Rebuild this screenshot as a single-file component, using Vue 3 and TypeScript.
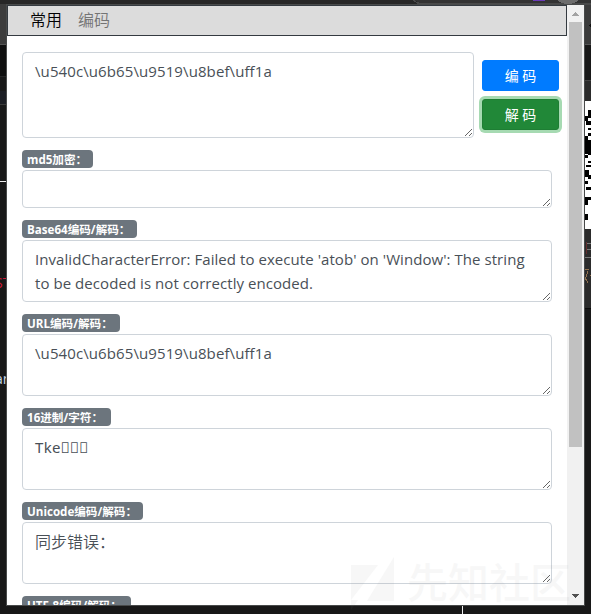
<script setup lang="ts">
import { ref } from 'vue'

interface Field {
  label: string
  labelWidth: number
  height: number
  value: string
  kind: string
}

const source = ref('\\u540c\\u6b65\\u9519\\u8bef\\uff1a')
const fields = ref<Field[]>([
  { label: 'md5加密：', labelWidth: 71, height: 38, value: '', kind: 'plain' },
  {
    label: 'Base64编码/解码：',
    labelWidth: 115,
    height: 62,
    value:
      "InvalidCharacterError: Failed to execute 'atob' on 'Window': The string\nto be decoded is not correctly encoded.",
    kind: 'message',
  },
  { label: 'URL编码/解码：', labelWidth: 98, height: 62, value: '\\u540c\\u6b65\\u9519\\u8bef\\uff1a', kind: 'code' },
  { label: '16进制/字符：', labelWidth: 89, height: 62, value: 'Tke\uE9F1\uE9F1\uE9F1', kind: 'hex' },
  { label: 'Unicode编码/解码：', labelWidth: 121, height: 62, value: '同步错误：', kind: 'cjk' },
  { label: 'UTF-8编码/解码：', labelWidth: 109, height: 62, value: '', kind: 'plain' },
])
</script>

<template>
  <main class="desktop">
    <svg class="backdrop" width="591" height="614" viewBox="0 0 591 614" shape-rendering="crispEdges">
      <rect width="591" height="614" fill="#181818" />
      <rect width="591" height="4" fill="#272727" />
      <path d="M414 0Q417 3 423 3H591V5H421Q416 4 413 0Z" fill="#494949" />
      <path d="M415 0H591V3H423Q417 3 415 0Z" fill="#333" />
      <rect x="533" width="12" height="1" fill="#6a3ab8" />
      <path d="M557 0H579Q575 4 568 4Q561 4 557 0Z" fill="#6d6d6d" />
      <rect y="4" width="7" height="40" fill="#3c3c3c" />
      <rect y="44" width="7" height="1" fill="#555" />
      <rect y="45" width="7" height="31" fill="#0f0f0f" />
      <rect y="76" width="7" height="1" fill="#262626" />
      <rect y="91" width="7" height="13" fill="#1b1d23" />
      <rect y="104" width="7" height="1" fill="#3a3a3a" />
      <rect y="181" width="6" height="1" fill="#eee" />
      <rect x="585" y="5" width="6" height="39" fill="#3b3b3b" />
      <path d="M589 26L591 23V28Z" fill="#111" />
      <rect x="585" y="44" width="6" height="1" fill="#555" />
      <rect x="585" y="80" width="6" height="229" fill="#2b2b2b" />
      <rect x="585" y="80" width="6" height="1" fill="#444" />
      <rect x="585" y="101" width="6" height="128" fill="#fff" />
      <path
        d="M588 110h3v8h-3zM585 116h3v5h-3zM586 121h5v4h-5zM588 128h3v2h-3zM588 133h3v3h-3zM585 136h3v18h-3zM588 140h3v15h-3zM585 155h3v3h-3zM588 161h3v2h-3zM586 165h5v2h-5zM585 170h4v7h-4zM588 175h3v4h-3zM585 181h3v3h-3zM586 187h5v3h-5zM585 197h6v3h-6zM585 200h3v5h-3zM585 214h3v6h-3z"
        fill="#000"
      />
      <path d="M586 243h5M586 249h5M585 257h6" stroke="#777" />
      <path d="M586 242v12" stroke="#612d2d" />
      <path d="M585 269h4M590 275h1M585 277l3 6M588 271l-3 9" stroke="#91714f" />
      <rect x="585" y="308" width="6" height="1" fill="#0b0b0b" />
      <rect x="462" y="606" width="1" height="8" fill="#eee" />
    </svg>
    <span class="peek peek-red">ST</span>
    <span class="peek peek-light">ar</span>

    <section class="popup">
      <div class="content">
        <nav class="tabs">
          <a class="tab active">常用</a>
          <a class="tab">编码</a>
        </nav>
        <div class="body">
          <div class="entry">
            <textarea v-model="source" class="box code source" spellcheck="false"></textarea>
            <div class="actions">
              <button class="btn primary">编 码</button>
              <button class="btn success">解 码</button>
            </div>
          </div>
          <div v-for="field in fields" :key="field.label" class="field">
            <span class="badge" :style="{ width: field.labelWidth + 'px' }">{{ field.label }}</span>
            <textarea
              v-model="field.value"
              class="box"
              :class="field.kind"
              :style="{ height: field.height + 'px' }"
              spellcheck="false"
            ></textarea>
          </div>
        </div>
      </div>
      <div class="scrollbar">
        <svg class="arrow" width="17" height="17" viewBox="0 0 17 17" shape-rendering="crispEdges">
          <path d="M8 7h1v1h1v1h1v1h1v1H5v-1h1V9h1V8h1z" fill="#a3a3a3" />
        </svg>
        <div class="thumb"></div>
        <svg class="arrow down" width="17" height="17" viewBox="0 0 17 17" shape-rendering="crispEdges">
          <path d="M5 6h7v1h-1v1h-1v1H9v1H8V9H7V8H6V7H5z" fill="#505050" />
        </svg>
      </div>
    </section>

    <div class="watermark">
      <svg width="43" height="54" viewBox="0 0 43 54">
        <path d="M0 8H27L0 43ZM43 0V44H16ZM0 43H7L0 53Z" />
      </svg>
      <span>先知社区</span>
    </div>
  </main>
</template>

<style>
body {
  margin: 0;
  overflow: hidden;
}
</style>

<style scoped>
* {
  box-sizing: border-box;
}
.desktop {
  position: relative;
  width: 591px;
  height: 614px;
  padding: 5px 6px 8px 7px;
  overflow: hidden;
  font-family: 'Open Sans', 'Noto Sans CJK SC', sans-serif;
}
.backdrop {
  position: absolute;
  inset: 0;
}
.peek {
  position: absolute;
  left: 0;
  width: 7px;
  overflow: hidden;
  font-size: 14px;
  line-height: 18px;
}
.peek-red {
  top: 274px;
  color: #cf1836;
  text-indent: -5px;
}
.peek-light {
  top: 370px;
  color: #c9d8e5;
  text-indent: -5px;
}
.popup {
  position: relative;
  display: flex;
  width: 577px;
  height: 600px;
  background: #fff;
  box-shadow: 0 0 0 1px #484a4a;
}
.content {
  width: 560px;
  height: 600px;
  overflow: hidden;
}
.tabs {
  display: flex;
  gap: 16px;
  height: 31px;
  padding: 0 22px;
  border: 1px solid #343a40;
  background: #dcdcdc;
}
.tab {
  font-size: 16px;
  font-weight: 350;
  line-height: 29px;
  color: #747474;
}
.tab.active {
  color: #000;
}
.body {
  padding: 16px 15px 0;
}
.entry {
  display: flex;
  gap: 8px;
  width: 538px;
  margin-bottom: 12px;
}
.box {
  display: block;
  width: 530px;
  margin: 0;
  padding: 6px 12px;
  border: 1px solid #ced4da;
  border-radius: 4px;
  outline: none;
  overflow: hidden;
  background: #fff;
  color: #495057;
  font-family: 'Open Sans', 'Noto Sans CJK SC', sans-serif;
  font-size: 15px;
  line-height: 24px;
  white-space: pre;
  resize: both;
}
.code {
  letter-spacing: 0.1px;
}
.message {
  letter-spacing: 0.06px;
}
.source {
  width: 452px;
  height: 86px;
}
.hex {
  font-family: 'Noto Sans', sans-serif;
  letter-spacing: 0.3px;
}
.cjk {
  font-family: 'Noto Sans CJK SC', sans-serif;
  font-size: 16px;
  font-weight: 350;
}
.actions {
  display: flex;
  flex-direction: column;
  gap: 8px;
  padding-top: 8px;
}
.btn {
  width: 77px;
  height: 31px;
  padding: 0;
  border: 1px solid #007bff;
  border-radius: 3px;
  background: #007bff;
  color: #fff;
  font-family: 'Open Sans', 'Noto Sans CJK SC', sans-serif;
  font-size: 14px;
  line-height: 29px;
}
.btn.success {
  border-color: #1e7e34;
  background: #218838;
  box-shadow: 0 0 0 3px #a6dab2;
}
.field {
  display: flex;
  flex-direction: column;
  gap: 2px;
  margin-bottom: 12px;
}
.badge {
  height: 18px;
  padding-left: 5px;
  border-radius: 4px;
  background: #6c757d;
  color: #fff;
  font-size: 11.6px;
  font-weight: 700;
  line-height: 19px;
  white-space: nowrap;
  overflow: hidden;
}
.scrollbar {
  display: flex;
  flex-direction: column;
  width: 17px;
  height: 600px;
  background: #f1f1f1;
}
.arrow {
  display: block;
  flex: none;
}
.arrow.down {
  margin-top: auto;
}
.thumb {
  width: 13px;
  height: 425px;
  margin-left: 2px;
  background: #c1c1c1;
}
.watermark {
  position: absolute;
  left: 351px;
  top: 557px;
  display: flex;
  gap: 13px;
  color: #808080;
  opacity: 0.06;
  font-size: 41px;
  font-weight: 500;
  line-height: 51px;
  pointer-events: none;
}
.watermark path {
  fill: currentColor;
}
</style>
